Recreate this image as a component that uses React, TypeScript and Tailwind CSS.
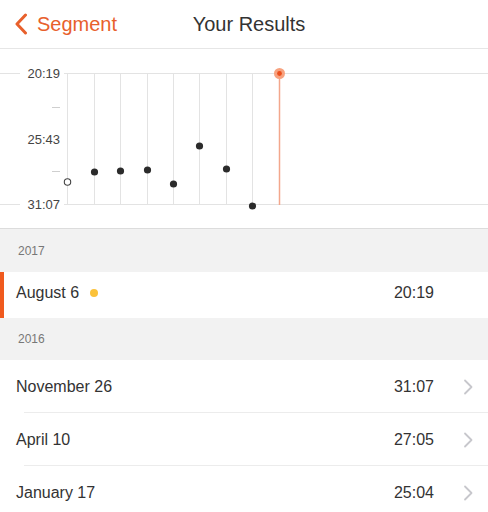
import React from "react";

const font = { fontFamily: '"Liberation Sans", Arial, sans-serif' };

function Chevron() {
  return (
    <svg width="10" height="16" viewBox="0 0 10 16" className="shrink-0">
      <path d="M2 1.5 L8.5 8 L2 14.5" fill="none" stroke="#c7c7cc" strokeWidth="1.8" strokeLinecap="round" strokeLinejoin="round" />
    </svg>
  );
}

function Chart() {
  const xs = [67, 94, 120, 147, 173, 199, 226, 252];
  const dots: [number, number][] = [
    [94, 123],
    [120, 122],
    [147, 121],
    [173, 135],
    [199, 97],
    [226, 120],
    [252, 157],
  ];
  return (
    <svg width="488" height="180" viewBox="0 0 488 180" className="block">
      <line x1="0" y1="24.5" x2="488" y2="24.5" stroke="#e3e3e3" strokeWidth="1" />
      <line x1="0" y1="155.5" x2="488" y2="155.5" stroke="#e3e3e3" strokeWidth="1" />
      {xs.map((x) => (
        <line key={x} x1={x + 0.5} y1="24" x2={x + 0.5} y2="156" stroke="#e3e3e3" strokeWidth="1" />
      ))}
      <line x1="279.5" y1="24" x2="279.5" y2="156" stroke="#f3a78c" strokeWidth="1.5" />
      <rect x="20" y="16" width="44" height="17" fill="#ffffff" />
      <rect x="20" y="147" width="44" height="17" fill="#ffffff" />
      <text x="60" y="29" textAnchor="end" fontSize="13" fill="#444" style={font}>20:19</text>
      <text x="60" y="95" textAnchor="end" fontSize="13" fill="#444" style={font}>25:43</text>
      <text x="60" y="160" textAnchor="end" fontSize="13" fill="#444" style={font}>31:07</text>
      <line x1="52" y1="58.5" x2="60" y2="58.5" stroke="#cfcfcf" strokeWidth="1" />
      <line x1="52" y1="122.5" x2="60" y2="122.5" stroke="#cfcfcf" strokeWidth="1" />
      <circle cx="67.5" cy="133" r="3.2" fill="#fff" stroke="#444" strokeWidth="1.1" />
      {dots.map(([x, y]) => (
        <circle key={x} cx={x + 0.5} cy={y} r="3.6" fill="#2b2b2b" />
      ))}
      <circle cx="279.5" cy="24.5" r="5.5" fill="#f7a27f" />
      <circle cx="279.5" cy="24.5" r="2.4" fill="#ec4f1c" />
    </svg>
  );
}

function Row({ date, time, last }: { date: string; time: string; last?: boolean }) {
  return (
    <div className="relative h-[53px] flex items-center bg-white">
      <div className="pl-4 text-[16px] text-[#333]">{date}</div>
      <div className="ml-auto text-[16px] text-[#333]">{time}</div>
      <div className="w-[54px] flex justify-end pr-[15px]">
        <Chevron />
      </div>
      {!last && <div className="absolute left-6 right-0 bottom-0 h-px bg-[#ececec]" />}
    </div>
  );
}

export default function App() {
  return (
    <div className="w-[488px] h-[512px] overflow-hidden bg-white" style={font}>
      <div className="h-[49px] border-b border-[#e6e6e6] flex items-center relative">
        <div className="flex items-center pl-[14px] gap-[9px]">
          <svg width="14" height="22" viewBox="0 0 14 22">
            <path d="M11.5 2 L3 11 L11.5 20" fill="none" stroke="#e8602c" strokeWidth="3" strokeLinecap="round" strokeLinejoin="round" />
          </svg>
          <span className="text-[20px] text-[#e8602c] leading-none">Segment</span>
        </div>
        <div className="absolute left-0 right-0 text-center text-[20px] text-[#333] leading-none pointer-events-none pl-[10px]">
          Your Results
        </div>
      </div>
      <div className="h-[180px] border-b border-[#dcdcdc]">
        <Chart />
      </div>
      <div className="h-[43px] bg-[#f2f2f2] flex items-center pl-[18px] text-[12px] text-[#777]">2017</div>
      <div className="h-[46px] bg-white flex items-center relative pb-[5px]">
        <div className="absolute left-0 top-0 bottom-0 w-[4px] bg-[#f05a1e]" />
        <div className="pl-4 text-[16px] text-[#333] flex items-center">
          August 6
          <span className="ml-[11px] w-[8px] h-[8px] rounded-full bg-[#fbc23a] inline-block" />
        </div>
        <div className="ml-auto mr-[54px] text-[16px] text-[#333]">20:19</div>
      </div>
      <div className="h-[42px] bg-[#f2f2f2] flex items-center pl-[18px] text-[12px] text-[#777]">2016</div>
      <Row date="November 26" time="31:07" />
      <Row date="April 10" time="27:05" />
      <Row date="January 17" time="25:04" last />
    </div>
  );
}
